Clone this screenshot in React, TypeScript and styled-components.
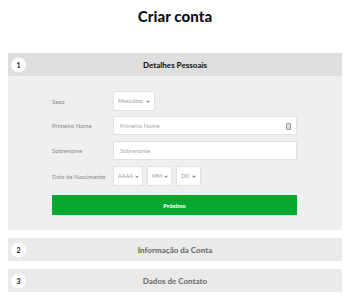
import React from "react";
import styled, { createGlobalStyle } from "styled-components";

const GlobalStyle = createGlobalStyle`
  body {
    margin: 0;
    background: #ffffff;
    font-family: Lato, "Liberation Sans", sans-serif;
  }
`;

const Page = styled.div`
  width: 350px;
  padding: 0 8px;
  box-sizing: border-box;
`;

const Title = styled.h1`
  margin: 0;
  padding-top: 7px;
  height: 53px;
  box-sizing: border-box;
  text-align: center;
  font-size: 15px;
  font-weight: 900;
  color: #111;
  letter-spacing: 0.1px;
`;

const Sections = styled.div`
  display: flex;
  flex-direction: column;
  gap: 8px;
`;

const Section = styled.section``;

const Header = styled.div<{ $active?: boolean }>`
  position: relative;
  display: flex;
  align-items: center;
  justify-content: center;
  height: 23px;
  background: ${(p) => (p.$active ? "#dedede" : "#eaeaea")};
  color: ${(p) => (p.$active ? "#1a1a1a" : "#707070")};
  font-size: 8px;
  font-weight: 900;
`;

const Step = styled.span`
  position: absolute;
  left: 3px;
  top: 50%;
  transform: translateY(-50%);
  width: 15px;
  height: 15px;
  border-radius: 50%;
  background: #fff;
  display: flex;
  align-items: center;
  justify-content: center;
  font-size: 7px;
  font-weight: 900;
  color: #333;
`;

const Body = styled.div`
  background: #efefef;
  padding: 15px 45px 15px 44px;
  display: flex;
  flex-direction: column;
  gap: 6px;
`;

const Row = styled.div`
  display: grid;
  grid-template-columns: 61px 1fr;
  align-items: center;
  height: 19px;
`;

const Label = styled.label`
  font-size: 6px;
  color: #888;
`;

const Controls = styled.div`
  display: flex;
  gap: 4px;
`;

const Select = styled.div<{ $w: number }>`
  width: ${(p) => p.$w}px;
  height: 20px;
  box-sizing: border-box;
  background: #fff;
  border: 1px solid #e2e2e2;
  display: flex;
  align-items: center;
  justify-content: space-between;
  gap: 2px;
  padding: 0 4px 0 4px;
  font-size: 5.5px;
  color: #999;
  white-space: nowrap;
  & svg {
    flex-shrink: 0;
  }
`;

const Input = styled.div`
  position: relative;
  height: 19px;
  box-sizing: border-box;
  background: #fff;
  border: 1px solid #e2e2e2;
  display: flex;
  align-items: center;
  padding: 0 6px;
  font-size: 6px;
  color: #aaa;
`;

const KeyIcon = styled.span`
  position: absolute;
  right: 5px;
  top: 6px;
  width: 3px;
  height: 5px;
  border: 1px solid #999;
  border-radius: 1px;
  background: #ddd;
`;

const Button = styled.button`
  margin-top: 4px;
  height: 20px;
  border: none;
  background: #05a82f;
  color: #fff;
  font-family: inherit;
  font-size: 6px;
  font-weight: 900;
`;

const Chevron = () => (
  <svg width="4" height="3" viewBox="0 0 4 3">
    <path d="M0.5 0.7 L2 2.3 L3.5 0.7" fill="none" stroke="#555" strokeWidth="0.9" />
  </svg>
);

const sel = (text: string, w: number) => (
  <Select $w={w}>
    {text}
    <Chevron />
  </Select>
);

export default function App() {
  return (
    <Page>
      <GlobalStyle />
      <Title>Criar conta</Title>
      <Sections>
        <Section>
          <Header $active>
            <Step>1</Step>
            Detalhes Pessoais
          </Header>
          <Body>
            <Row>
              <Label>Sexo</Label>
              <Controls>{sel("Masculino", 42)}</Controls>
            </Row>
            <Row>
              <Label>Primeiro Nome</Label>
              <Input>
                Primeiro Nome
                <KeyIcon />
              </Input>
            </Row>
            <Row>
              <Label>Sobrenome</Label>
              <Input>Sobrenome</Input>
            </Row>
            <Row>
              <Label>Data de Nascimento</Label>
              <Controls>
                {sel("AAAA", 30)}
                {sel("MM", 25)}
                {sel("DD", 25)}
              </Controls>
            </Row>
            <Button>Próximo</Button>
          </Body>
        </Section>
        <Section>
          <Header>
            <Step>2</Step>
            Informação da Conta
          </Header>
        </Section>
        <Section>
          <Header>
            <Step>3</Step>
            Dados de Contato
          </Header>
        </Section>
      </Sections>
    </Page>
  );
}
